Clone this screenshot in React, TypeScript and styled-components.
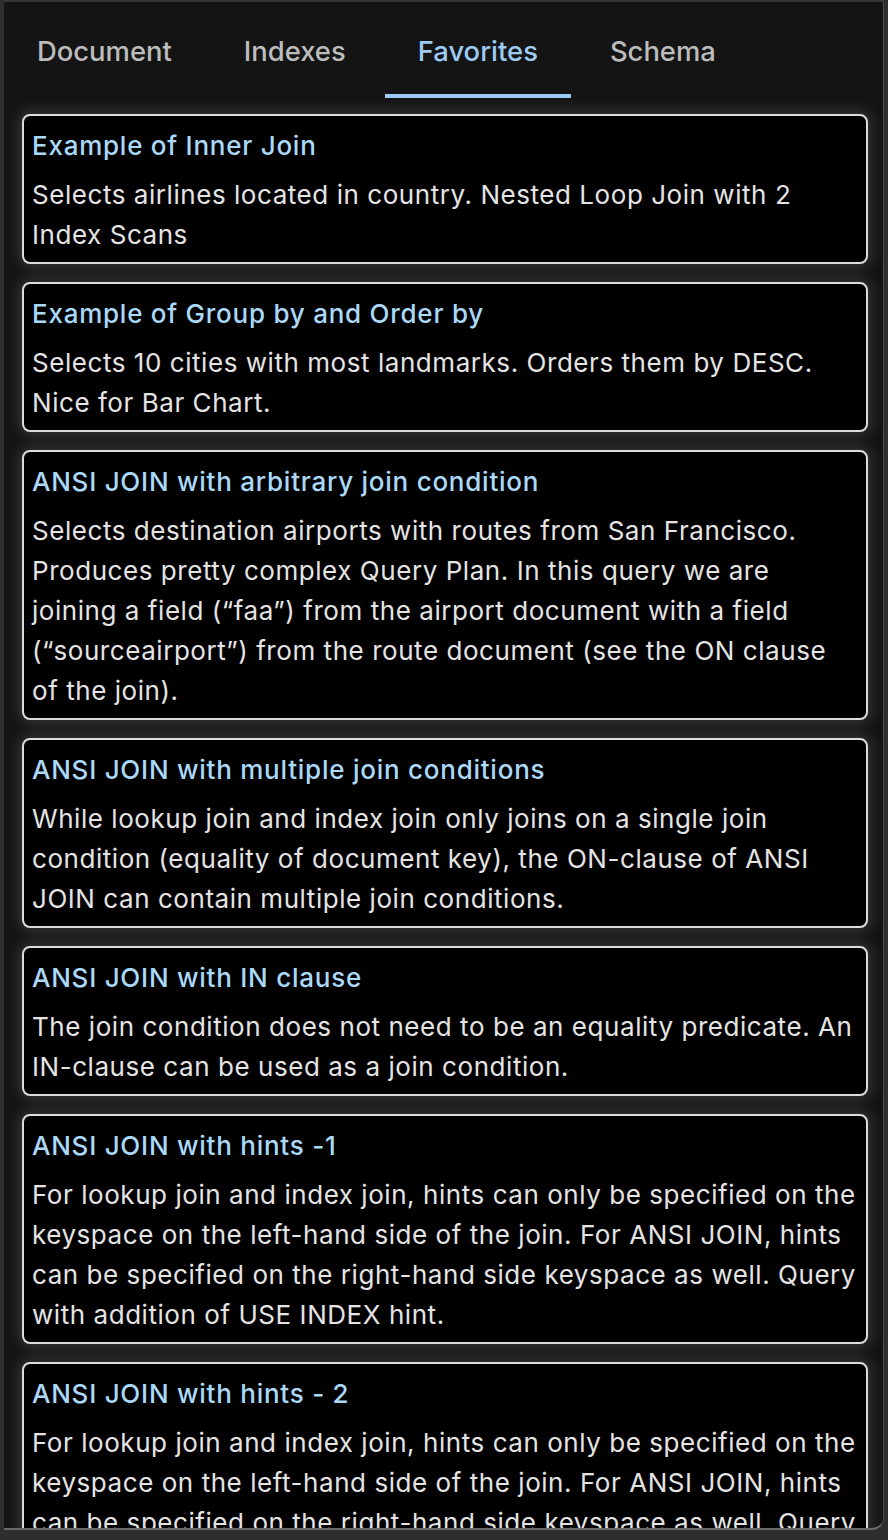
import React from 'react';
import styled, { createGlobalStyle } from 'styled-components';

const favorites = [
  {
    title: 'Example of Inner Join',
    lines: ['Selects airlines located in country. Nested Loop Join with 2', 'Index Scans'],
  },
  {
    title: 'Example of Group by and Order by',
    lines: ['Selects 10 cities with most landmarks. Orders them by DESC.', 'Nice for Bar Chart.'],
  },
  {
    title: 'ANSI JOIN with arbitrary join condition',
    lines: [
      'Selects destination airports with routes from San Francisco.',
      'Produces pretty complex Query Plan. In this query we are',
      'joining a field (\u201cfaa\u201d) from the airport document with a field',
      '(\u201csourceairport\u201d) from the route document (see the ON clause',
      'of the join).',
    ],
  },
  {
    title: 'ANSI JOIN with multiple join conditions',
    lines: [
      'While lookup join and index join only joins on a single join',
      'condition (equality of document key), the ON-clause of ANSI',
      'JOIN can contain multiple join conditions.',
    ],
  },
  {
    title: 'ANSI JOIN with IN clause',
    lines: [
      'The join condition does not need to be an equality predicate. An',
      'IN-clause can be used as a join condition.',
    ],
  },
  {
    title: 'ANSI JOIN with hints -1',
    lines: [
      'For lookup join and index join, hints can only be specified on the',
      'keyspace on the left-hand side of the join. For ANSI JOIN, hints',
      'can be specified on the right-hand side keyspace as well. Query',
      'with addition of USE INDEX hint.',
    ],
  },
  {
    title: 'ANSI JOIN with hints - 2',
    lines: [
      'For lookup join and index join, hints can only be specified on the',
      'keyspace on the left-hand side of the join. For ANSI JOIN, hints',
      'can be specified on the right-hand side keyspace as well. Query',
      'with addition of USE INDEX hint.',
    ],
  },
];

const tabs = ['Document', 'Indexes', 'Favorites', 'Schema'];

function App() {
  return (
    <>
      <GlobalStyle />
      <Panel>
        <TabBar>
          {tabs.map((t) => (
            <Tab key={t} $active={t === 'Favorites'}>
              {t}
            </Tab>
          ))}
        </TabBar>
        <List>
          {favorites.map((f, i) => (
            <Card key={i}>
              <CardTitle>{f.title}</CardTitle>
              <CardText>
                {f.lines.map((l, j) => (
                  <Line key={j}>{l}</Line>
                ))}
              </CardText>
            </Card>
          ))}
        </List>
      </Panel>
    </>
  );
}

const GlobalStyle = createGlobalStyle`
  html, body {
    margin: 0;
    padding: 0;
    background: #2e2e2e;
    font-family: Inter, "Noto Sans", "Liberation Sans", sans-serif;
  }
`;

const Panel = styled.div`
  margin-left: 4px;
  width: 880px;
  height: 1530px;
  box-sizing: border-box;
  overflow: hidden;
  background: #141414;
  border-top: 2px solid #353535;
  border-right: 1px solid #4a4a4a;
  border-bottom: 2px solid #6a6a6a;
  border-bottom-right-radius: 12px;
`;

const TabBar = styled.div`
  display: flex;
  gap: 6px;
  height: 96px;
`;

const Tab = styled.div<{ $active?: boolean }>`
  display: flex;
  align-items: center;
  padding: 6px 33px 0;
  font-size: 27.4px;
  font-weight: 500;
  color: ${(p) => (p.$active ? '#9dcbf5' : '#bcbcbc')};
  border-bottom: 4px solid ${(p) => (p.$active ? '#9dcbf5' : 'transparent')};
`;

const List = styled.div`
  display: flex;
  flex-direction: column;
  gap: 18px;
  padding: 16px 15px 0 18px;
`;

const Card = styled.div`
  background: #000;
  border: 2px solid #dcdcdc;
  border-radius: 8px;
  padding: 10px 8px 7px;
  box-shadow: 0 0 14px 3px rgba(200, 200, 200, 0.2);
`;

const CardTitle = styled.div`
  font-size: 26px;
  line-height: 40px;
  font-weight: 500;
  letter-spacing: 0.75px;
  color: #aad9f8;
  margin-bottom: 9px;
  white-space: nowrap;
`;

const CardText = styled.div`
  font-size: 26px;
  line-height: 40px;
  letter-spacing: 0.55px;
  color: #e4e4e4;
`;

const Line = styled.div`
  white-space: nowrap;
`;

export default App;
